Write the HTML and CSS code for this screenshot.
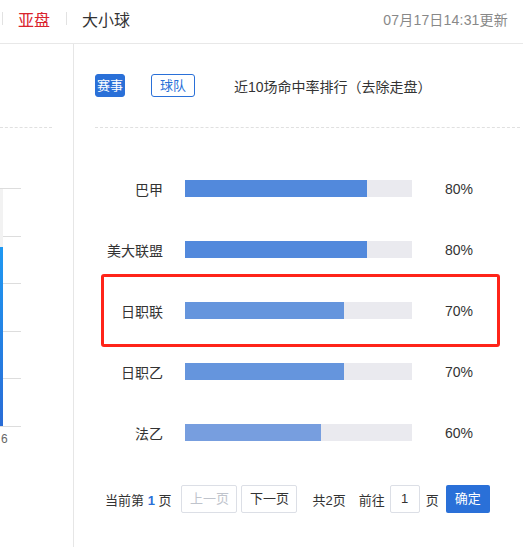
FILE: index.html
```html
<!DOCTYPE html>
<html lang="zh-CN">
<head>
<meta charset="utf-8">
<link rel="stylesheet" href="styles.css">
</head>
<body>
<div class="header">
  <div class="tabs">
    <span class="sep"></span>
    <span class="tab active">亚盘</span>
    <span class="sep"></span>
    <span class="tab">大小球</span>
  </div>
  <div class="time">07月17日14:31更新</div>
</div>
<div class="main">
  <div class="left">
    <div class="dash-left"></div>
    <div class="chart">
      <div class="grid"><div></div><div></div><div></div><div></div><div></div></div>
      <div class="col"><div class="col-fill"></div></div>
    </div>
    <div class="axis">6</div>
  </div>
  <div class="right">
    <div class="toolbar">
      <span class="btn primary">赛事</span>
      <span class="btn outline">球队</span>
      <span class="title">近10场命中率排行（去除走盘）</span>
    </div>
    <div class="dash"></div>
    <div class="rows">
      <div class="row"><span class="label">巴甲</span><span class="track"><span class="fill c80" style="width:80%"></span></span><span class="pct">80%</span></div>
      <div class="row"><span class="label">美大联盟</span><span class="track"><span class="fill c80" style="width:80%"></span></span><span class="pct">80%</span></div>
      <div class="row hl"><span class="label">日职联</span><span class="track"><span class="fill c70" style="width:70%"></span></span><span class="pct">70%</span><span class="box"></span></div>
      <div class="row"><span class="label">日职乙</span><span class="track"><span class="fill c70" style="width:70%"></span></span><span class="pct">70%</span></div>
      <div class="row"><span class="label">法乙</span><span class="track"><span class="fill c60" style="width:60%"></span></span><span class="pct">60%</span></div>
    </div>
    <div class="pager">
      <span class="cur">当前第 <b>1</b> 页</span>
      <span class="pbtn disabled">上一页</span>
      <span class="pbtn next">下一页</span>
      <span class="total">共2页</span>
      <span class="goto">前往</span>
      <span class="input">1</span>
      <span class="unit">页</span>
      <span class="ok">确定</span>
    </div>
  </div>
</div>
</body>
</html>
```
FILE: styles.css
```css
* { box-sizing: border-box; }
html, body { margin: 0; padding: 0; background: #fff; }
body {
  width: 523px;
  height: 547px;
  overflow: hidden;
  font-family: "Liberation Sans", "Noto Sans CJK SC", sans-serif;
  color: #333;
}
.header {
  height: 44px;
  border-bottom: 1px solid #e8e8e8;
  display: flex;
  align-items: center;
  justify-content: space-between;
  padding: 0 15px 6px 0;
}
.tabs { display: flex; align-items: center; }
.sep {
  display: inline-block;
  width: 1px;
  height: 13px;
  background: #e2e2e2;
  margin-left: 2px;
}
.tab { font-size: 16px; margin: 0 14px 0 15px; }
.tab.active { color: #d9232d; }
.time { font-size: 14px; color: #888; letter-spacing: 0.2px; }
.main { display: flex; height: 503px; }
.left {
  width: 74px;
  border-right: 1px solid #e6e6e6;
  display: flex;
  flex-direction: column;
}
.dash-left {
  margin-top: 83px;
  width: 52px;
  border-top: 1px dashed #e0e0e0;
}
.chart {
  position: relative;
  margin-top: 60px;
  width: 21px;
  height: 239px;
}
.grid { display: flex; flex-direction: column; border-bottom: 1px solid #ddd; }
.grid div { height: 47.6px; border-top: 1px solid #ddd; }
.col {
  position: absolute;
  left: 0; top: 1px;
  width: 3px;
  height: 237px;
  background: #f2f2f2;
  display: flex;
  flex-direction: column;
  justify-content: flex-end;
}
.col-fill {
  height: 179px;
  background: linear-gradient(#1e98f2, #2a6cd6);
}
.axis { font-size: 12px; color: #666; margin: 5px 0 0 1px; line-height: 14px; }
.right {
  flex: 1;
  padding-left: 21px;
  display: flex;
  flex-direction: column;
}
.toolbar {
  margin-top: 30px;
  display: flex;
  align-items: center;
  height: 23px;
}
.btn {
  height: 23px;
  line-height: 21px;
  font-size: 13px;
  border-radius: 3px;
  text-align: center;
}
.btn.primary { width: 30px; background: #2a70d8; color: #fff; border: 1px solid #2a70d8; }
.btn.outline { width: 44px; margin-left: 26px; border: 1px solid #2a70d8; color: #2a70d8; }
.title { margin-left: 39px; font-size: 14px; color: #333; }
.dash { margin-top: 30px; border-top: 1px dashed #e0e0e0; margin-right: 3px; }
.rows { margin-top: 30px; display: flex; flex-direction: column; }
.row {
  position: relative;
  height: 61px;
  display: flex;
  align-items: center;
}
.label { width: 68px; text-align: right; font-size: 14px; }
.track {
  margin-left: 22px;
  width: 227px;
  height: 17px;
  background: #eaeaef;
  display: flex;
}
.fill { height: 100%; }
.c80 { background: #5289dc; }
.c70 { background: #6595dd; }
.c60 { background: #779edf; }
.pct { margin-left: 33px; font-size: 14px; }
.box {
  position: absolute;
  left: 6px;
  top: -6px;
  width: 399px;
  height: 73px;
  border: 3px solid #ff2419;
  border-radius: 3px;
}
.pager {
  margin-top: 22px;
  display: flex;
  align-items: center;
  font-size: 13px;
  height: 28px;
}
.cur { margin-left: 10px; }
.cur b { color: #2a70d8; font-weight: bold; }
.pbtn {
  height: 28px;
  width: 56px;
  line-height: 26px;
  text-align: center;
  border: 1px solid #dcdfe6;
  border-radius: 2px;
}
.pbtn.disabled { color: #c0c4cc; margin-left: 10px; }
.pbtn.next { margin-left: 4px; color: #333; }
.total { margin-left: 15px; }
.goto { margin-left: 13px; }
.input {
  margin-left: 5px;
  width: 30px;
  height: 28px;
  line-height: 26px;
  text-align: center;
  border: 1px solid #dcdfe6;
  border-radius: 2px;
}
.unit { margin-left: 6px; }
.ok {
  margin-left: 7px;
  width: 44px;
  height: 28px;
  line-height: 28px;
  text-align: center;
  color: #fff;
  background: #2a70d8;
  border-radius: 2px;
}
```
